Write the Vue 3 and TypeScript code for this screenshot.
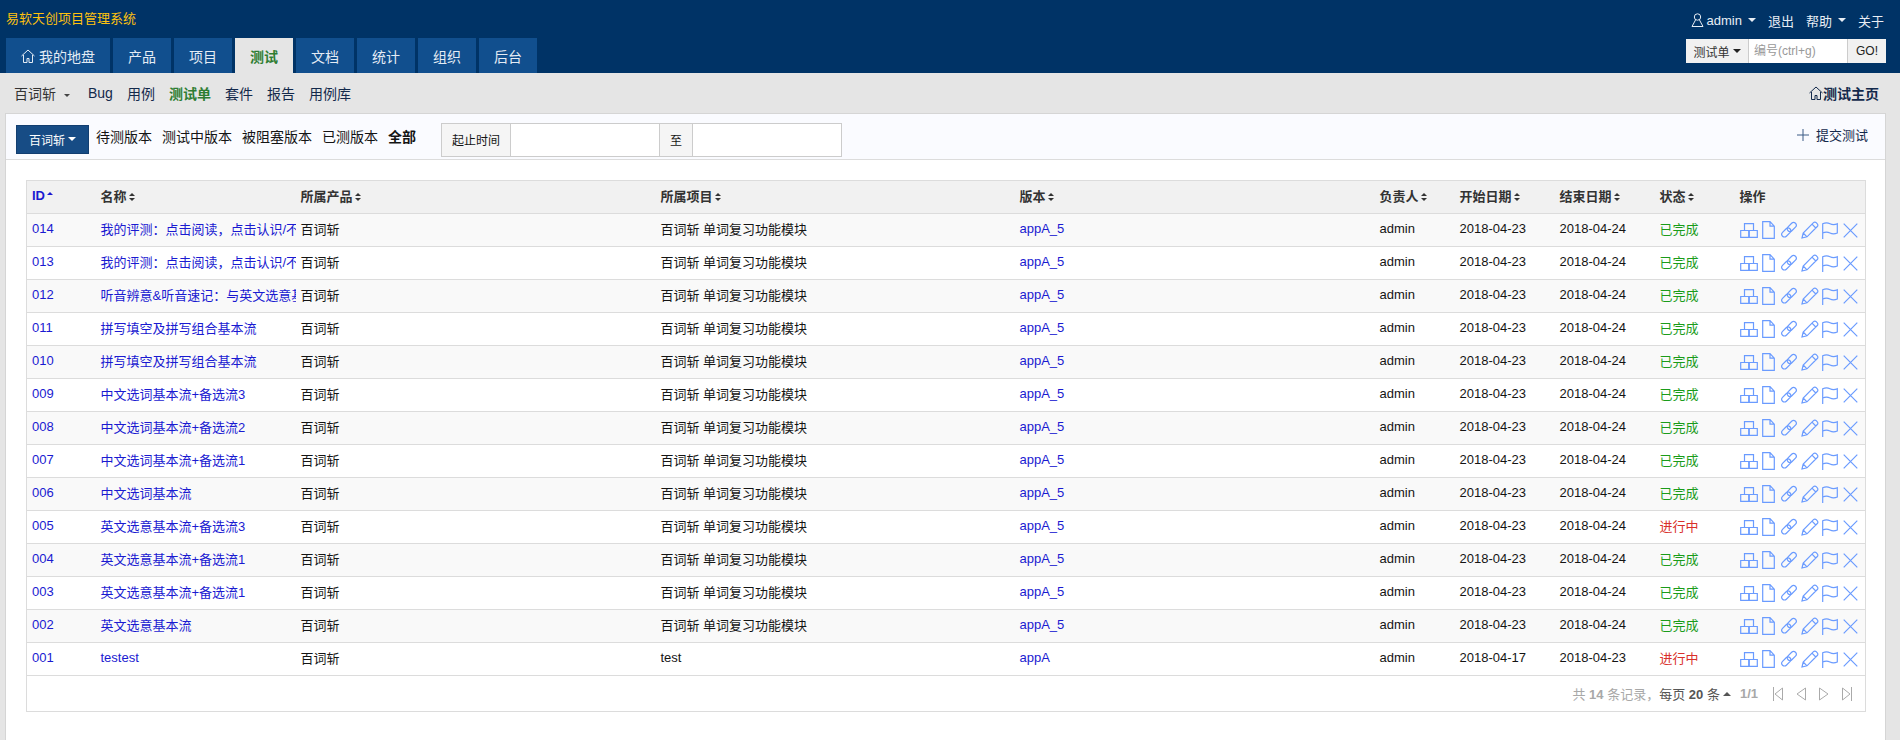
<script setup lang="ts">
interface Row { id: string; name: string; project: string; build: string; begin: string; end: string; status: string }
const pj = '百词斩 单词复习功能模块'
const mk = (id: string, name: string, end = '2018-04-24', status = '已完成'): Row => ({
  id, name, project: pj, build: 'appA_5', begin: '2018-04-23', end, status,
})
const rows: Row[] = [
  mk('014', '我的评测：点击阅读，点击认识/不'),
  mk('013', '我的评测：点击阅读，点击认识/不'),
  mk('012', '听音辨意&听音速记：与英文选意基'),
  mk('011', '拼写填空及拼写组合基本流'),
  mk('010', '拼写填空及拼写组合基本流'),
  mk('009', '中文选词基本流+备选流3'),
  mk('008', '中文选词基本流+备选流2'),
  mk('007', '中文选词基本流+备选流1'),
  mk('006', '中文选词基本流'),
  mk('005', '英文选意基本流+备选流3', '2018-04-24', '进行中'),
  mk('004', '英文选意基本流+备选流1'),
  mk('003', '英文选意基本流+备选流1'),
  mk('002', '英文选意基本流'),
  { id: '001', name: 'testest', project: 'test', build: 'appA', begin: '2018-04-17', end: '2018-04-23', status: '进行中' },
]
const tabs = ['产品', '项目', '测试', '文档', '统计', '组织', '后台']
const subs = ['Bug', '用例', '测试单', '套件', '报告', '用例库']
const filters = ['待测版本', '测试中版本', '被阻塞版本', '已测版本', '全部']
const heads = ['名称', '所属产品', '所属项目', '版本', '负责人', '开始日期', '结束日期', '状态']
</script>

<template>
  <div class="page">
    <header class="top">
      <div class="top-row">
        <div class="brand">易软天创项目管理系统</div>
        <div class="user">
          <svg class="ico-user" viewBox="0 0 13 14" width="13" height="14"><circle cx="6.500" cy="4" r="3.200" /><path d="M4.500 7 1 13.500h11L8.500 7" /></svg>
          <span>admin</span><i class="caret" />
          <span class="gap">退出</span>
          <span class="gap">帮助</span><i class="caret" />
          <span class="gap">关于</span>
        </div>
      </div>
      <div class="tab-row">
        <nav class="tabs">
          <a class="tab home">
            <svg viewBox="0 0 14 14" width="14" height="14"><path d="M0.500 7 7 1l6.500 6M2.500 6v7.500h3.500v-4h2v4h3.500V6" /></svg>
            我的地盘
          </a>
          <a v-for="t in tabs" :key="t" class="tab" :class="{ on: t === '测试' }">{{ t }}</a>
        </nav>
        <div class="search">
          <span class="s-type">测试单<i class="caret dark" /></span>
          <span class="s-input">编号(ctrl+g)</span>
          <span class="s-go">GO!</span>
        </div>
      </div>
    </header>

    <div class="subnav">
      <span class="crumb">百词斩<i class="caret dark small" /></span>
      <a v-for="s in subs" :key="s" class="sub" :class="{ on: s === '测试单' }">{{ s }}</a>
      <a class="sub-home">
        <svg viewBox="0 0 14 14" width="14" height="14"><path d="M0.500 7 7 1l6.500 6M2.500 6v7.500h3.500v-4h2v4h3.500V6" /></svg>测试主页
      </a>
    </div>

    <main class="card">
      <div class="toolbar">
        <button class="pbtn">百词斩<i class="caret" /></button>
        <a v-for="f in filters" :key="f" class="filter" :class="{ strong: f === '全部' }">{{ f }}</a>
        <div class="dates">
          <span class="d-label">起止时间</span>
          <span class="d-input" />
          <span class="d-to">至</span>
          <span class="d-input" />
        </div>
        <a class="submit">
          <svg viewBox="0 0 12 12" width="12" height="12"><path d="M6 0v12M0 6h12" /></svg>
          提交测试
        </a>
      </div>

      <div class="content">
        <table class="grid">
          <colgroup>
            <col class="c1" /><col class="c2" /><col class="c3" /><col class="c4" />
            <col class="c5" /><col class="c6" /><col class="c7" /><col class="c8" />
            <col class="c9" /><col />
          </colgroup>
          <thead>
            <tr>
              <th class="idh">ID<i class="sort-up" /></th>
              <th v-for="h in heads" :key="h">{{ h }}<i class="sort" /></th>
              <th>操作</th>
            </tr>
          </thead>
          <tbody>
            <tr v-for="r in rows" :key="r.id">
              <td class="link">{{ r.id }}</td>
              <td class="link clip">{{ r.name }}</td>
              <td>百词斩</td>
              <td>{{ r.project }}</td>
              <td class="link">{{ r.build }}</td>
              <td>admin</td>
              <td>{{ r.begin }}</td>
              <td>{{ r.end }}</td>
              <td :class="r.status === '已完成' ? 'done' : 'doing'">{{ r.status }}</td>
              <td class="opc">
                <div class="ops">
                  <svg viewBox="0 0 18 15" width="18" height="15"><path d="M4.500 7.500V.7h9v6.800M.7 7.500h8v6.800h-8zM9.300 7.500h8v6.800h-8z" /></svg>
                  <svg class="doc" viewBox="0 0 13 18" width="13" height="18"><path d="M.7.700h7.300l4.300 4.500v12.100H.7zM8 .7v4.500h4.300" /></svg>
                  <svg viewBox="0 0 18 18" width="18" height="18"><rect x="1" y="8.800" width="10.500" height="5.400" rx="2.700" transform="rotate(-45 6.250 11.500)" /><rect x="6.500" y="3.300" width="10.500" height="5.400" rx="2.700" transform="rotate(-45 11.750 6)" /></svg>
                  <svg viewBox="0 0 18 18" width="18" height="18"><path d="M1 17l1.200-5L12.500 1.700a1.900 1.900 0 0 1 2.700 0l1.100 1.100a1.900 1.900 0 0 1 0 2.700L6 15.800zM2.200 12 6 15.800M11 3.200l3.800 3.800" /></svg>
                  <svg viewBox="0 0 16 17" width="16" height="17"><path d="M.7 17V1.700C4 .3 6 .7 8 1.700s4.500 1.200 7.300 0v9.300c-2.800 1.200-5.300 1-7.300 0s-4-1.500-7.300 0" /></svg>
                  <svg class="x" viewBox="0 0 15 15" width="15" height="15"><path d="M.7.700l13.600 13.600M14.300.7.700 14.300" /></svg>
                </div>
              </td>
            </tr>
          </tbody>
        </table>
        <div class="foot">
          <span>共 <b>14</b> 条记录，</span><span class="dk">每页 <b>20</b> 条</span><i class="caret-up" />
          <b class="pg">1/1</b>
          <svg viewBox="0 0 10 14" width="10" height="14"><path d="M.5 0v14M9.500 1 2 7l7.500 6z" /></svg>
          <svg viewBox="0 0 10 14" width="10" height="14"><path d="M9.500 1 1 7l8.500 6z" /></svg>
          <svg viewBox="0 0 10 14" width="10" height="14"><path d="M.5 1 9 7l-8.500 6z" /></svg>
          <svg viewBox="0 0 10 14" width="10" height="14"><path d="M9.500 0v14M.5 1 8 7l-7.500 6z" /></svg>
        </div>
      </div>
    </main>
  </div>
</template>

<style>
html, body { margin: 0; padding: 0; background: #fff; }
</style>

<style scoped>
.page {
  width: 1900px;
  height: 740px;
  overflow: hidden;
  background: #e5e5e5;
  font-family: "Liberation Sans", "Noto Sans CJK SC", sans-serif;
  font-size: 13px;
  color: #141414;
  display: flex;
  flex-direction: column;
}
.top { background: #036; height: 73px; padding: 0 5px 0 6px; box-sizing: border-box; flex: none; }
.top-row { display: flex; justify-content: space-between; height: 38px; padding-top: 10px; box-sizing: border-box; }
.brand { color: #ffc20e; font-size: 13px; line-height: 18px; }
.user { color: #e8eef5; display: flex; align-items: center; height: 20px; padding-right: 11px; font-size: 13px; }
.gap { margin-left: 12px; }
.ico-user { fill: none; stroke: #e8eef5; stroke-width: 1; margin-right: 3px; }
.caret { display: inline-block; width: 0; height: 0; border-left: 4px solid transparent; border-right: 4px solid transparent; border-top: 4px solid currentColor; margin-left: 6px; }
.caret.dark { color: #222; margin-left: 3px; vertical-align: 2px; }
.caret.small { border-width: 3px 3px 0; color: #444; margin-left: 8px; }
.tab-row { display: flex; justify-content: space-between; height: 35px; }
.tabs { display: flex; gap: 3px; }
.tab { height: 35px; width: 58px; background: #114f8e; color: #e4ecf5; display: flex; align-items: center; justify-content: center; gap: 4px; font-size: 14px; }
.tab.home { width: 104px; }
.tab.home svg { fill: none; stroke: #e4ecf5; stroke-width: 1; }
.tab.on { background: #e5e5e5; color: #2e7d32; font-weight: 700; }
.search { display: flex; height: 24px; margin: 1px 9px 0 0; font-size: 12px; background: #fff; }
.s-type { width: 63px; background: #f1f1f1; display: flex; align-items: center; justify-content: center; color: #333; border-right: 1px solid #ccc; box-sizing: border-box; }
.s-input { width: 98px; padding-left: 5px; box-sizing: border-box; line-height: 24px; color: #999; }
.s-go { width: 39px; background: #f1f1f1; border-left: 1px solid #ccc; box-sizing: border-box; line-height: 24px; text-align: center; color: #222; }
.subnav { height: 40px; flex: none; display: flex; align-items: center; padding: 0 21px 0 14px; color: #13294b; font-size: 14px; }
.crumb { color: #333; margin-right: 18px; }
.sub { margin-right: 14px; color: #13294b; }
.sub.on { color: #2e7d32; font-weight: 700; }
.sub-home { margin-left: auto; display: flex; align-items: center; font-weight: 700; margin-right: 0; }
.sub-home svg { fill: none; stroke: #13294b; stroke-width: 1; }
.card { margin: 0 14px 0 5px; background: #fff; flex: 1; border: 1px solid #d5d5d5; border-bottom: 0; box-sizing: border-box; }
.toolbar { height: 46px; background: #fafbff; border-bottom: 1px solid #dcdcdc; box-sizing: border-box; display: flex; align-items: center; padding: 0 0 0 10px; }
.pbtn { width: 73px; height: 29px; background: #174c85; border: 1px solid #123e70; color: #fff; font: inherit; font-size: 12px; padding: 0; margin: 5px 7px 0 0; display: flex; align-items: center; justify-content: center; }
.pbtn .caret { margin-left: 3px; }
.filter { font-size: 14px; margin: 0 10px 1px 0; }
.filter.strong { font-weight: 700; margin-right: 0; }
.dates { display: flex; height: 34px; margin: 6px 0 0 25px; border: 1px solid #ccc; box-sizing: border-box; font-size: 12px; background: #fff; }
.d-label, .d-to { background: #f5f5f5; display: flex; align-items: center; justify-content: center; }
.d-label { width: 68px; border-right: 1px solid #ccc; }
.d-to { width: 34px; border-left: 1px solid #ccc; border-right: 1px solid #ccc; box-sizing: border-box; }
.d-input { width: 148px; display: block; }
.submit { margin: 0 17px 4px auto; display: flex; align-items: center; gap: 7px; color: #13294b; font-size: 13px; }
.submit svg { stroke: #3a5a85; fill: none; }
.content { padding: 20px 19px 0 20px; }
.grid { width: 1840px; table-layout: fixed; border-collapse: collapse; border: 1px solid #dcdcdc; }
.c1 { width: 69px; } .c2 { width: 200px; } .c3 { width: 360px; } .c4 { width: 359px; }
.c5 { width: 360px; } .c6 { width: 80px; } .c7 { width: 100px; } .c8 { width: 100px; } .c9 { width: 80px; }
.grid th { height: 33px; box-sizing: border-box; background: #f1f1f1; text-align: left; padding: 0 5px 4px; font-size: 13px; font-weight: 700; color: #333; }
.grid th:first-child { color: #1a1ad1; }
.grid td { height: 33px; padding: 0 5px 3px; border-top: 1px solid #dcdcdc; white-space: nowrap; overflow: hidden; font-size: 13px; box-sizing: border-box; }
.grid tbody tr:nth-child(odd) td { background: #f9f9f9; }
.grid tbody tr:nth-child(even) td { background: #fff; }
.grid td.opc { padding: 0 0 0 5px; }
.link { color: #1a1ad1; }
.done { color: #1a9c1a; }
.doing { color: #d9302a; }
.sort, .sort-up { display: inline-block; margin-left: 2px; position: relative; width: 6px; height: 9px; vertical-align: -1px; }
.sort::before, .sort-up::before { content: ""; position: absolute; left: 0; top: 0; border-left: 3px solid transparent; border-right: 3px solid transparent; border-bottom: 3px solid #333; }
.sort::after { content: ""; position: absolute; left: 0; top: 5px; border-left: 3px solid transparent; border-right: 3px solid transparent; border-top: 3px solid #333; }
.sort-up::before { border-bottom-color: #1a1ad1; }
.ops { display: flex; align-items: center; gap: 3px; height: 31px; }
.ops svg { fill: none; stroke: #6a9bff; stroke-width: 1.200; flex: none; }
.ops .doc { margin: 0 2px 0 1px; }
.ops .x { margin-left: 2px; }
.foot { height: 36px; border: 1px solid #dcdcdc; border-top: 0; width: 1840px; box-sizing: border-box; display: flex; align-items: center; justify-content: flex-end; padding-right: 13px; color: #a8a8a8; font-size: 13px; }
.foot .dk { color: #555; }
.caret-up { display: inline-block; border-left: 4px solid transparent; border-right: 4px solid transparent; border-bottom: 4px solid #555; margin: 0 0 0 3px; }
.pg { margin: 0 2px 0 9px; }
.foot svg { fill: none; stroke: #aaa; stroke-width: 1; margin-left: 13px; }
</style>
